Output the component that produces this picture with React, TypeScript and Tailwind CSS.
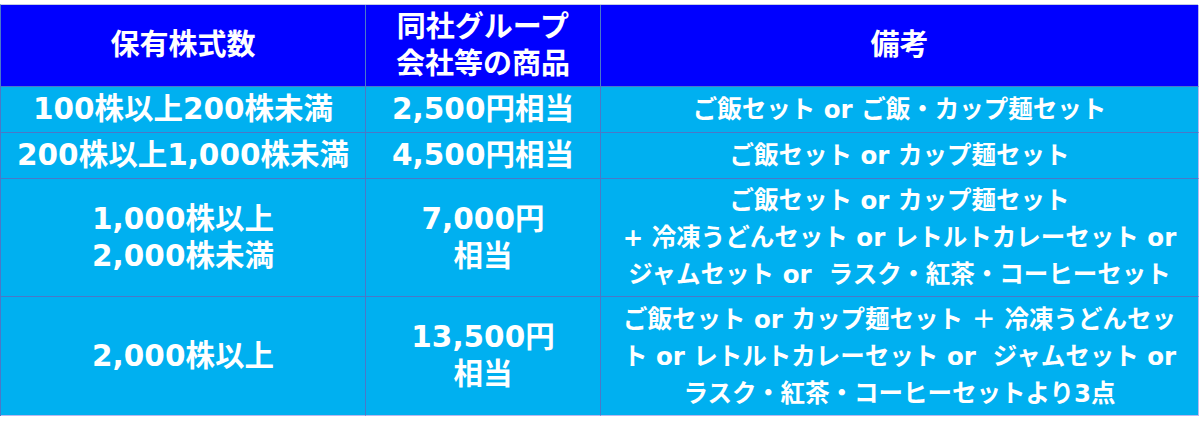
const rows = [
  {
    h: "h-[46px]",
    shares: ["100株以上200株未満"],
    value: ["2,500円相当"],
    note: ["ご飯セット or ご飯・カップ麺セット"],
  },
  {
    h: "h-[46px]",
    shares: ["200株以上1,000株未満"],
    value: ["4,500円相当"],
    note: ["ご飯セット or カップ麺セット"],
  },
  {
    h: "h-[118px]",
    shares: ["1,000株以上", "2,000株未満"],
    value: ["7,000円", "相当"],
    note: [
      "ご飯セット or カップ麺セット",
      "+ 冷凍うどんセット or レトルトカレーセット or",
      "ジャムセット or  ラスク・紅茶・コーヒーセット",
    ],
  },
  {
    h: "h-[119px]",
    shares: ["2,000株以上"],
    value: ["13,500円", "相当"],
    note: [
      "ご飯セット or カップ麺セット ＋ 冷凍うどんセッ",
      "ト or レトルトカレーセット or  ジャムセット or",
      "ラスク・紅茶・コーヒーセットより3点",
    ],
  },
];

function Lines({ lines, size }: { lines: string[]; size: string }) {
  return (
    <div className={`${size} text-center`}>
      {lines.map((l) => (
        <div key={l} className="whitespace-pre">
          {l}
        </div>
      ))}
    </div>
  );
}

export default function App() {
  const cell =
    "flex items-center justify-center border-r border-b border-[#4a78c8]";
  return (
    <div className="h-[429px] w-[1200px] bg-white pt-[4px] font-[family-name:DejaVu_Sans,Noto_Sans_CJK_JP,sans-serif] font-bold text-white">
      <div className="grid w-[1198px] grid-cols-[365px_235px_598px] border-t border-l border-[#c3cbe4] border-l-[#4a78c8]">
        <div className={`${cell} h-[82px] bg-[#0000ff]`}>
          <Lines lines={["保有株式数"]} size="text-[29px] leading-[37px]" />
        </div>
        <div className={`${cell} h-[82px] bg-[#0000ff]`}>
          <Lines
            lines={["同社グループ", "会社等の商品"]}
            size="text-[29px] leading-[37px]"
          />
        </div>
        <div className={`${cell} h-[82px] bg-[#0000ff] border-r-[#b9b9f0]`}>
          <Lines lines={["備考"]} size="text-[29px] leading-[37px]" />
        </div>
        {rows.map((r, i) => {
          const last = i === rows.length - 1 ? "border-b-[#b9b9f0]" : "";
          return (
            <div key={i} className="contents">
              <div className={`${cell} ${r.h} ${last} bg-[#00b0f0]`}>
                <Lines lines={r.shares} size="text-[29.5px] leading-[37px]" />
              </div>
              <div className={`${cell} ${r.h} ${last} bg-[#00b0f0]`}>
                <Lines lines={r.value} size="text-[29.5px] leading-[37px]" />
              </div>
              <div
                className={`${cell} ${r.h} ${last} bg-[#00b0f0] border-r-[#b9b9f0]`}
              >
                <Lines lines={r.note} size="text-[24.5px] leading-[37px]" />
              </div>
            </div>
          );
        })}
      </div>
    </div>
  );
}
